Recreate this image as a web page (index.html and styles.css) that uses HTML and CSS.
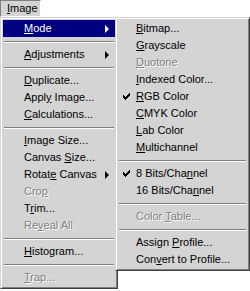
FILE: index.html
```html
<!DOCTYPE html>
<html>
<head>
<meta charset="utf-8">
<link rel="stylesheet" href="styles.css">
</head>
<body>
<div class="menubar">
  <div class="menubar-item"><u>I</u>mage</div>
</div>
<div class="menu main">
  <div class="item active"><span class="label"><u>M</u>ode</span><span class="arrow"></span></div>
  <div class="sep"></div>
  <div class="item"><span class="label"><u>A</u>djustments</span><span class="arrow"></span></div>
  <div class="sep"></div>
  <div class="item"><span class="label"><u>D</u>uplicate...</span></div>
  <div class="item"><span class="label">Appl<u>y</u> Image...</span></div>
  <div class="item"><span class="label"><u>C</u>alculations...</span></div>
  <div class="sep"></div>
  <div class="item"><span class="label"><u>I</u>mage Size...</span></div>
  <div class="item"><span class="label">Canvas <u>S</u>ize...</span></div>
  <div class="item"><span class="label">Rotat<u>e</u> Canvas</span><span class="arrow"></span></div>
  <div class="item disabled"><span class="label">Cro<u>p</u></span></div>
  <div class="item"><span class="label">T<u>r</u>im...</span></div>
  <div class="item disabled"><span class="label">Re<u>v</u>eal All</span></div>
  <div class="sep"></div>
  <div class="item"><span class="label"><u>H</u>istogram...</span></div>
  <div class="sep"></div>
  <div class="item disabled"><span class="label"><u>T</u>rap...</span></div>
</div>
<div class="menu sub">
  <div class="item"><span class="label"><u>B</u>itmap...</span></div>
  <div class="item"><span class="label"><u>G</u>rayscale</span></div>
  <div class="item disabled"><span class="label"><u>D</u>uotone</span></div>
  <div class="item"><span class="label"><u>I</u>ndexed Color...</span></div>
  <div class="item checked"><span class="check"><svg width="7" height="7" viewBox="0 0 7 7" shape-rendering="crispEdges"><path d="M6 0h1v1h-1zM5 1h2v1h-2zM0 2h1v1h-1zM4 2h3v1h-3zM0 3h2v1h-2zM3 3h3v1h-3zM0 4h5v1h-5zM1 5h3v1h-3zM2 6h1v1h-1z" fill="#000"/></svg></span><span class="label"><u>R</u>GB Color</span></div>
  <div class="item"><span class="label"><u>C</u>MYK Color</span></div>
  <div class="item"><span class="label"><u>L</u>ab Color</span></div>
  <div class="item"><span class="label"><u>M</u>ultichannel</span></div>
  <div class="sep"></div>
  <div class="item checked"><span class="check"><svg width="7" height="7" viewBox="0 0 7 7" shape-rendering="crispEdges"><path d="M6 0h1v1h-1zM5 1h2v1h-2zM0 2h1v1h-1zM4 2h3v1h-3zM0 3h2v1h-2zM3 3h3v1h-3zM0 4h5v1h-5zM1 5h3v1h-3zM2 6h1v1h-1z" fill="#000"/></svg></span><span class="label">8 Bits/Cha<u>n</u>nel</span></div>
  <div class="item"><span class="label">16 Bits/Cha<u>n</u>nel</span></div>
  <div class="sep"></div>
  <div class="item disabled"><span class="label">Color <u>T</u>able...</span></div>
  <div class="sep"></div>
  <div class="item"><span class="label">Assign <u>P</u>rofile...</span></div>
  <div class="item"><span class="label">Con<u>v</u>ert to Profile...</span></div>
</div>
</body>
</html>
```

FILE: styles.css
```css
html, body {
  margin: 0;
  padding: 0;
  background: #fff;
}
body {
  position: relative;
  width: 250px;
  height: 291px;
  overflow: hidden;
  font-family: "Liberation Sans", Arial, sans-serif;
  font-size: 11px;
  color: #000;
}
u {
  text-decoration: underline;
  text-underline-offset: 1px;
}
.menubar {
  display: flex;
  height: 17px;
}
.menubar-item {
  box-sizing: border-box;
  width: 41px;
  height: 17px;
  padding-left: 6px;
  line-height: 15px;
  background: #d4d4d4;
  border: 1px solid;
  border-color: #808080 #fff #fff #808080;
}
.menu {
  box-sizing: border-box;
  background: #d4d4d4;
  border: 1px solid;
  border-color: #d4d4d4 #404040 #404040 #d4d4d4;
  box-shadow: inset 1px 1px 0 #fff, inset -1px -1px 0 #808080;
  padding: 2px;
}
.main {
  width: 118px;
}
.sub {
  position: absolute;
  left: 115px;
  top: 17px;
  width: 135px;
}
.item {
  position: relative;
  display: flex;
  align-items: center;
  height: 17px;
  line-height: 17px;
  white-space: nowrap;
}
.main .item {
  padding-left: 21px;
}
.sub .item {
  padding-left: 18px;
}
.item.active {
  background: #000080;
  color: #fff;
}
.item.disabled {
  color: #808080;
  text-shadow: 1px 1px 0 #fff;
}
.arrow {
  position: absolute;
  right: 6px;
  top: 5px;
  width: 0;
  height: 0;
  border-top: 4px solid transparent;
  border-bottom: 4px solid transparent;
  border-left: 4px solid #000;
}
.item.active .arrow {
  border-left-color: #fff;
}
.check {
  position: absolute;
  left: 5px;
  top: 5px;
  width: 7px;
  height: 7px;
  display: flex;
}
.sep {
  height: 9px;
  display: flex;
  align-items: center;
  padding: 0 1px;
}
.sep::before {
  content: "";
  flex: 1;
  height: 1px;
  border-top: 1px solid #808080;
  border-bottom: 1px solid #fff;
  height: 0;
}
```
